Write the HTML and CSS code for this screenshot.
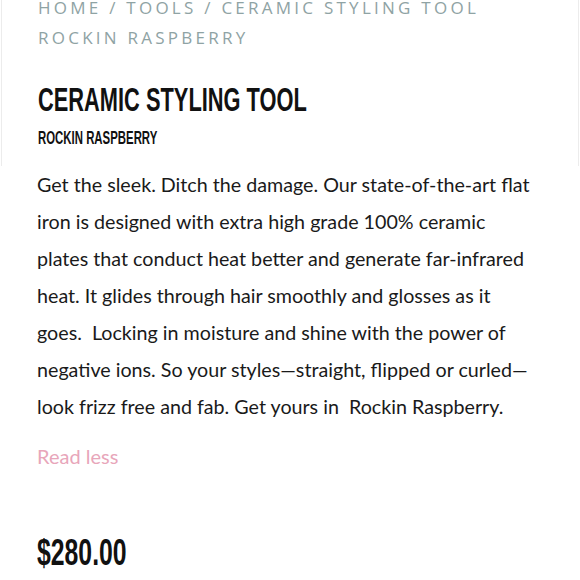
FILE: index.html
```html
<!DOCTYPE html>
<html>
<head>
<meta charset="utf-8">
<link rel="stylesheet" href="styles.css">
</head>
<body>
<div class="page">
  <header class="head">
    <nav class="crumbs">HOME / TOOLS / CERAMIC STYLING TOOL<br>ROCKIN RASPBERRY</nav>
    <h1 class="title"><span class="cond t1">CERAMIC STYLING TOOL</span></h1>
    <div class="variant"><span class="cond t2">ROCKIN RASPBERRY</span></div>
  </header>
  <section class="desc">
    <p class="copy">Get the sleek. Ditch the damage. Our state-of-the-art flat<br>iron is designed with extra high grade 100% ceramic<br>plates that conduct heat better and generate far-infrared<br>heat. It glides through hair smoothly and glosses as it<br>goes.&nbsp; Locking in moisture and shine with the power of<br>negative ions. So your styles—straight, flipped or curled—<br>look frizz free and fab. Get yours in&nbsp; Rockin Raspberry.</p>
    <a class="more">Read less</a>
    <div class="price"><span class="cond t3">$280.00</span></div>
  </section>
</div>
</body>
</html>
```
FILE: styles.css
```css
html, body { margin: 0; padding: 0; background: #fff; }
body { overflow: hidden; }
.page { width: 580px; }
.head {
  margin: -7px 1px 0 1px;
  border-left: 1px solid #ececec;
  border-right: 1px solid #ececec;
  padding: 0 0 0 36px;
  height: 173px;
  box-sizing: border-box;
}
.crumbs {
  font-family: "Open Sans", "Liberation Sans", sans-serif;
  font-size: 17px;
  letter-spacing: 3.25px;
  line-height: 30px;
  color: #8fa3a4;
}
.cond {
  display: inline-block;
  font-family: "Liberation Sans", Arial, sans-serif;
  font-weight: bold;
  color: #111;
  transform-origin: left center;
  white-space: nowrap;
}
.title {
  margin: 26px 0 0 0;
  font-size: 34px;
  line-height: 40px;
  font-weight: bold;
}
.t1 { transform: scaleX(0.642); }
.variant {
  margin-top: 6px;
  font-size: 19px;
  line-height: 24px;
}
.t2 { transform: scaleX(0.6); }
.desc { padding: 0 20px 0 37px; }
.copy {
  margin: 0;
  font-family: "Lato", "Noto Sans", sans-serif;
  font-size: 19.7px;
  line-height: 37px;
  color: #1a1a1a;
  white-space: nowrap;
}
.more {
  display: block;
  margin-top: 16px;
  font-family: "Lato", sans-serif;
  font-size: 20px;
  line-height: 30px;
  color: #e8a6ba;
}
.price {
  margin-top: 62px;
  font-size: 37px;
  line-height: 40px;
}
.t3 { transform: scaleX(0.67); }
```
